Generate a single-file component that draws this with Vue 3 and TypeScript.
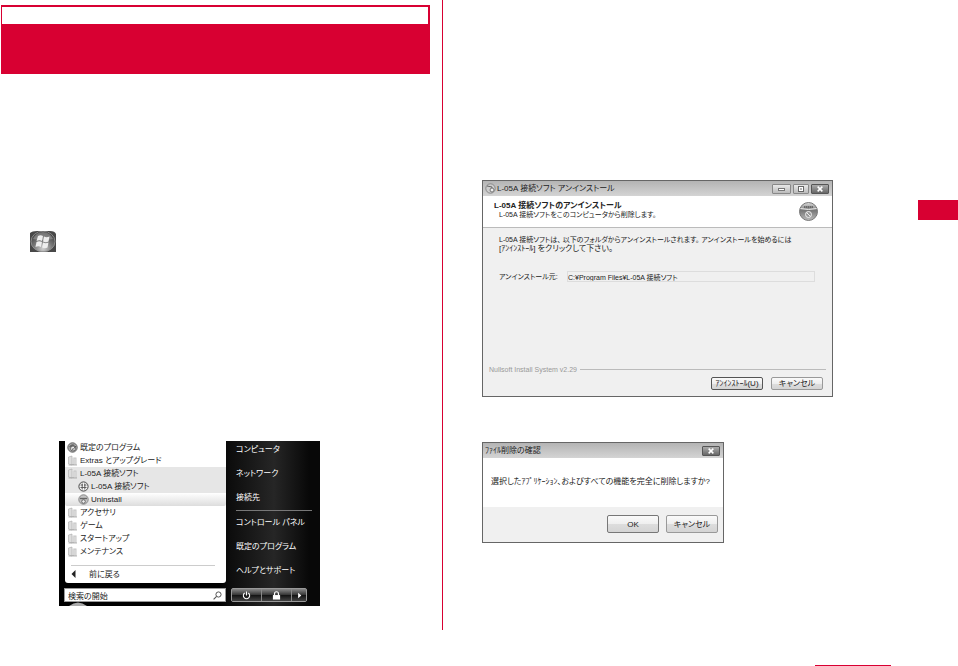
<script setup lang="ts">
import { ref } from 'vue'

interface ProgramItem {
  label: string
  icon: 'disc' | 'folder' | 'modem' | 'remove'
  state?: 'open' | 'child' | 'active'
}

const programs: ProgramItem[] = [
  { label: '既定のプログラム', icon: 'disc' },
  { label: 'Extras とアップグレード', icon: 'folder' },
  { label: 'L-05A 接続ソフト', icon: 'folder', state: 'open' },
  { label: 'L-05A 接続ソフト', icon: 'modem', state: 'child' },
  { label: 'Uninstall', icon: 'remove', state: 'active' },
  { label: 'アクセサリ', icon: 'folder' },
  { label: 'ゲーム', icon: 'folder' },
  { label: 'スタートアップ', icon: 'folder' },
  { label: 'メンテナンス', icon: 'folder' },
]

const places: string[] = ['コンピュータ', 'ネットワーク', '接続先']
const tools: string[] = ['コントロール パネル', '既定のプログラム', 'ヘルプとサポート']

const query = ref('検索の開始')
const folder = ref('C:¥Program Files¥L-05A 接続ソフト')
</script>

<template>
  <div class="page">
    <main class="columns">
      <section class="left">
        <header class="chapter"><div class="chapter-strip"></div></header>

        <svg class="orb" viewBox="0 0 26 21" aria-hidden="true">
          <defs>
            <radialGradient id="orbFill" cx="50%" cy="85%" r="80%">
              <stop offset="0" stop-color="#d0d0d0" />
              <stop offset=".5" stop-color="#777" />
              <stop offset="1" stop-color="#3c3c3c" />
            </radialGradient>
          </defs>
          <path d="M0 2Q2 0 7 0H20Q25 0 26 3V21H0Z" fill="#484848" />
          <ellipse cx="13" cy="10.5" rx="12" ry="10.3" fill="url(#orbFill)" stroke="#999" stroke-width=".8" />
          <path d="M3 8Q6 1 13 1T23 8Q13 10 3 8Z" fill="#aaa" opacity=".5" />
          <path d="M8 5Q10.500 3.500 13 5L12 10Q9.500 8.500 6.500 10ZM14 5.500Q16.500 7 19.500 5.500L18.500 10.500Q16 12 13 10.500ZM6.500 11Q9 9.500 12 11L11 16Q8.500 14.500 5.500 16ZM13 11.500Q15.500 13 18.500 11.500L17.500 16.500Q15 18 12 16.500Z" fill="#eee" />
        </svg>

        <div class="start">
          <div class="programs">
            <ul>
              <li v-for="(p, i) in programs" :key="i" :class="p.state">
                <a href="#">
                  <svg v-if="p.icon === 'folder'" class="ico" viewBox="0 0 11 11" aria-hidden="true">
                    <path d="M1.500 2L5 1V10L1.500 9Z" fill="#ddd" stroke="#aaa" stroke-width=".6" />
                    <path d="M5 2.500H9.500V10H5Z" fill="#c4c4c4" />
                    <path d="M6 2V9M8 3.500V10" stroke="#f4f4f4" stroke-width=".8" />
                    <path d="M1.500 10H10" stroke="#999" stroke-width=".7" />
                  </svg>
                  <svg v-else-if="p.icon === 'disc'" class="ico" viewBox="0 0 11 11" aria-hidden="true">
                    <circle cx="5.5" cy="5.5" r="4.7" fill="#aaa" stroke="#666" />
                    <path d="M2 5Q4 1 8 3L5 6Z" fill="#666" />
                    <circle cx="6" cy="6.5" r="2.5" fill="#eee" stroke="#666" />
                    <path d="M4.8 6.5L6 7.6L9 4" fill="none" stroke="#555" />
                  </svg>
                  <svg v-else-if="p.icon === 'modem'" class="ico" viewBox="0 0 11 11" aria-hidden="true">
                    <circle cx="5.5" cy="5.5" r="4.6" fill="#f4f4f4" stroke="#444" />
                    <path d="M4.2 2.5V8.5M6.8 2.5V8.5M2.5 4H5M6 4H8.5M2.5 6.5H8.5" stroke="#555" stroke-width=".9" />
                  </svg>
                  <svg v-else class="ico" viewBox="0 0 11 11" aria-hidden="true">
                    <circle cx="5.5" cy="5.5" r="4.7" fill="#c4c4c4" stroke="#888" />
                    <path d="M2 4.500H9" stroke="#666" stroke-width="1.4" />
                    <circle cx="5.5" cy="7.5" r="1.8" fill="#eee" stroke="#666" />
                  </svg>
                  <span>{{ p.label }}</span>
                </a>
              </li>
            </ul>
            <button type="button" class="back">
              <svg viewBox="0 0 5 8" aria-hidden="true"><path d="M4.5 0V8L0.500 4Z" fill="#222" /></svg>
              <span>前に戻る</span>
            </button>
          </div>

          <nav class="links">
            <a v-for="l in places" :key="l" href="#">{{ l }}</a>
            <hr />
            <a v-for="l in tools" :key="l" href="#">{{ l }}</a>
          </nav>

          <div class="search">
            <input v-model="query" type="text" aria-label="検索の開始" />
            <svg viewBox="0 0 9 9" aria-hidden="true">
              <circle cx="5.5" cy="3.5" r="2.6" fill="none" stroke="#555" />
              <path d="M3.6 5.4L.6 8.4" stroke="#555" stroke-width="1.2" />
            </svg>
          </div>

          <div class="power">
            <button type="button" aria-label="電源">
              <svg viewBox="0 0 10 10" aria-hidden="true">
                <path d="M3 2.2A3.5 3.5 0 1 0 7 2.2M5 .5V5" fill="none" stroke="#fff" stroke-width="1.2" />
              </svg>
            </button>
            <button type="button" aria-label="ロック">
              <svg viewBox="0 0 10 10" aria-hidden="true">
                <rect x="1" y="4.5" width="8" height="5" fill="#fff" />
                <path d="M2.8 5V3A2.2 2.2 0 0 1 7.2 3V5" fill="none" stroke="#fff" stroke-width="1.3" />
              </svg>
            </button>
            <button type="button" class="more" aria-label="その他">
              <svg viewBox="0 0 10 10" aria-hidden="true"><path d="M3.5 2L7 5L3.5 8Z" fill="#fff" /></svg>
            </button>
          </div>

          <svg class="peek" viewBox="0 0 18 4" aria-hidden="true">
            <path d="M0 4Q9-3 18 4Z" fill="#aaa" />
          </svg>
        </div>
      </section>

      <section class="right">
        <div class="window installer">
          <div class="titlebar">
            <svg class="ico" viewBox="0 0 11 11" aria-hidden="true">
              <circle cx="5.5" cy="5.5" r="4.7" fill="#ccc" stroke="#888" />
              <path d="M2 3L7 4L6 8" fill="none" stroke="#666" />
              <circle cx="7" cy="7" r="2" fill="#eee" stroke="#777" />
            </svg>
            <span class="title">L-05A 接続ソフト アンインストール</span>
            <div class="controls">
              <button type="button" aria-label="最小化">
                <svg viewBox="0 0 17 8" aria-hidden="true"><rect x="5.5" y="3.5" width="6" height="2" fill="#fff" stroke="#777" /></svg>
              </button>
              <button type="button" class="max" aria-label="最大化">
                <svg viewBox="0 0 14 8" aria-hidden="true"><rect x="4.5" y="1.5" width="5" height="5" fill="#fff" stroke="#666" /><path d="M6 4H8" stroke="#666" /></svg>
              </button>
              <button type="button" class="close" aria-label="閉じる">
                <svg viewBox="0 0 17 8" aria-hidden="true"><path d="M6 1.5L11 6.5M11 1.5L6 6.5" stroke="#fff" stroke-width="1.6" /></svg>
              </button>
            </div>
          </div>
          <div class="banner">
            <div>
              <h2>L-05A 接続ソフトのアンインストール</h2>
              <p>L-05A 接続ソフトをこのコンピュータから削除します。</p>
            </div>
            <svg viewBox="0 0 19 19" aria-hidden="true">
              <defs>
                <linearGradient id="badgeFill" x2="0" y2="1">
                  <stop offset="0" stop-color="#ddd" />
                  <stop offset=".45" stop-color="#777" />
                  <stop offset="1" stop-color="#bbb" />
                </linearGradient>
              </defs>
              <circle cx="9.5" cy="9.5" r="9" fill="url(#badgeFill)" stroke="#777" />
              <path d="M1.5 6.5Q9.5 8.5 17.5 6.5" fill="none" stroke="#e8e8e8" />
              <path d="M5 5H14" stroke="#555" stroke-width="1.4" stroke-dasharray="1.5 .5" />
              <circle cx="9.5" cy="12.5" r="3" fill="#999" stroke="#eee" />
              <path d="M7.5 10.5L11.5 14.5" stroke="#eee" />
            </svg>
          </div>
          <div class="body">
            <p>L-05A 接続ソフトは、 以下のフォルダからアンインストールされます。 アンインストールを始めるには</p>
            <p class="hint">[ｱﾝｲﾝｽﾄｰﾙ] をクリックして下さい。</p>
            <div class="field">
              <label for="source">アンインストール元:</label>
              <input id="source" v-model="folder" type="text" readonly />
            </div>
            <div class="brand"><span>Nullsoft Install System v2.29</span></div>
            <div class="actions">
              <button type="button" class="primary">ｱﾝｲﾝｽﾄｰﾙ(U)</button>
              <button type="button">キャンセル</button>
            </div>
          </div>
        </div>

        <div class="window confirm">
          <div class="titlebar">
            <span class="title">ﾌｧｲﾙ削除の確認</span>
            <div class="controls">
              <button type="button" class="close" aria-label="閉じる">
                <svg viewBox="0 0 17 8" aria-hidden="true"><path d="M6 1.5L11 6.5M11 1.5L6 6.5" stroke="#fff" stroke-width="1.6" /></svg>
              </button>
            </div>
          </div>
          <p class="message">選択したｱﾌﾟﾘｹｰｼｮﾝ、およびすべての機能を完全に削除しますか?</p>
          <div class="choices">
            <button type="button" class="primary">OK</button>
            <button type="button">キャンセル</button>
          </div>
        </div>
      </section>

      <aside class="tab"></aside>
    </main>
    <footer class="foot"><hr /></footer>
  </div>
</template>

<style>
body {
  background: #fff;
}
</style>

<style scoped>
* {
  box-sizing: border-box;
}
.page {
  font-family: "Liberation Sans", "Noto Sans CJK JP", sans-serif;
  font-size: 8px;
  line-height: 9px;
  font-feature-settings: "palt";
  color: #222;
}
p, h2, ul, hr {
  margin: 0;
  padding: 0;
}
ul {
  list-style: none;
}
a {
  color: inherit;
  text-decoration: none;
}
button, input {
  font: inherit;
  font-feature-settings: inherit;
  color: inherit;
  padding: 0;
  margin: 0;
  border: 0;
  min-width: 0;
}
svg {
  display: block;
  flex: none;
}
.ico {
  width: 11px;
  height: 11px;
}
.columns {
  display: grid;
  grid-template-columns: minmax(0, 443fr) minmax(0, 475fr) 40px;
  min-height: 630px;
}
.left {
  border-right: 1px solid #d80032;
  padding: 5px 12px 24px 1px;
}
.chapter {
  background: #d80032;
  height: 69px;
  padding: 2px 2px 0 1px;
}
.chapter-strip {
  background: #fff;
  height: 17px;
}
.orb {
  width: 26px;
  height: 21px;
  margin: 157px 0 0 29px;
}

.start {
  width: 261px;
  margin: 189px 0 0 58px;
  padding: 0 8px 0 5px;
  background: linear-gradient(90deg, #000 0 160px, #0c0c0c 170px, #262626 215px, #080808 250px);
  display: grid;
  grid-template-columns: 162px 1fr;
  column-gap: 5px;
}
.programs {
  background: #fff;
  border-radius: 0 0 3px 3px;
  height: 142px;
  margin-left: 1px;
}
.programs li a {
  display: flex;
  align-items: center;
  gap: 2px;
  height: 13px;
  padding-left: 2px;
  white-space: nowrap;
}
.programs li.open,
.programs li.child {
  background: #e6e6e6;
}
.programs li.child a,
.programs li.active a {
  padding-left: 13px;
}
.programs li.active {
  background: linear-gradient(#fff, #ddd);
  border-radius: 2px;
}
.back {
  display: flex;
  align-items: center;
  gap: 13px;
  width: 144px;
  height: 17px;
  margin: 7px 0 0 6px;
  border-top: 1px solid #ccc;
  background: none;
}
.back svg {
  width: 5px;
  height: 8px;
}
.links {
  display: flex;
  flex-direction: column;
  height: 142px;
  padding-left: 5px;
  color: #fff;
  white-space: nowrap;
}
.links a {
  flex: none;
  height: 24px;
  line-height: 18px;
}
.links hr {
  border: 0;
  border-top: 1px solid #777;
  margin: -3px 0 3px;
}
.search {
  display: flex;
  align-items: center;
  height: 14px;
  margin-top: 5px;
  padding: 0 3px 0 3px;
  background: #fff;
  border: 1px solid #999;
}
.search input {
  flex: 1;
  background: none;
  height: 12px;
}
.search svg {
  width: 9px;
  height: 9px;
}
.power {
  display: flex;
  height: 14px;
  margin: 5px 5px 0 0;
  border: 1px solid #999;
  border-radius: 2px;
}
.power button {
  flex: 1;
  display: flex;
  align-items: center;
  justify-content: center;
  background: linear-gradient(#888, #333 50%, #111 50%, #444);
  border-right: 1px solid #888;
}
.power .more {
  flex: none;
  width: 14px;
  border: 0;
}
.power svg {
  width: 9px;
  height: 9px;
}
.peek {
  width: 18px;
  height: 4px;
  margin-left: 5px;
}

.right {
  padding: 180px 20px 0 39px;
}
.window {
  border: 1px solid #666;
  background: #f0f0f0;
}
.titlebar {
  display: flex;
  align-items: center;
  gap: 1px;
  height: 15px;
  padding: 0 3px 0 2px;
  background: linear-gradient(#b4b4b4, #d4d4d4);
  white-space: nowrap;
}
.title {
  flex: 1;
}
.controls {
  display: flex;
  gap: 2px;
}
.controls button {
  width: 19px;
  height: 10px;
  background: linear-gradient(#e8e8e8, #bbb);
  border: 1px solid #888;
  border-radius: 1px;
}
.controls .max {
  width: 16px;
}
.controls .close {
  width: 18px;
  background: linear-gradient(#aaa, #666);
  border-color: #555;
}
.controls svg {
  width: 100%;
  height: 8px;
}
.installer {
  width: 351px;
}
.banner {
  display: flex;
  justify-content: space-between;
  align-items: center;
  height: 32px;
  padding: 0 14px 0 11px;
  background: #fff;
  border-bottom: 1px solid #bbb;
}
.banner h2 {
  font-size: 8px;
  line-height: 9px;
}
.banner p {
  padding-left: 5px;
  font-size: 7px;
}
.banner svg {
  width: 19px;
  height: 19px;
}
.banner > div {
  padding-bottom: 4px;
}
.body {
  padding: 7px 6px 6px;
}
.body p {
  padding-left: 10px;
  font-size: 7px;
  white-space: nowrap;
}
.body .hint {
  font-size: 8px;
}
.field {
  display: flex;
  align-items: center;
  margin-top: 18px;
  padding: 0 11px 0 10px;
  font-size: 7px;
}
.field label {
  width: 68px;
}
.field input {
  flex: 1;
  height: 11px;
  background: #f0f0f0;
  border: 1px solid #ddd;
}
.brand {
  display: flex;
  align-items: center;
  gap: 3px;
  margin-top: 83px;
  color: #999;
  font-size: 7px;
}
.brand::after {
  content: "";
  flex: 1;
  border-top: 1px solid #bbb;
}
.actions,
.choices {
  display: flex;
  justify-content: flex-end;
}
.actions {
  gap: 8px;
  margin-top: 3px;
  padding-right: 3px;
}
.actions button,
.choices button {
  width: 52px;
  background: linear-gradient(#fafafa, #eee 50%, #ddd 50%, #d4d4d4);
  border: 1px solid #999;
  border-radius: 2px;
  white-space: nowrap;
}
.actions button {
  display: flex;
  align-items: center;
  justify-content: center;
  height: 13px;
}
.actions .primary {
  border-color: #555;
}
.confirm {
  width: 242px;
  margin-top: 45px;
}
.confirm .message {
  height: 49px;
  padding: 19px 0 0 8px;
  background: #fff;
  white-space: nowrap;
}
.choices {
  gap: 7px;
  padding: 8px 5px 9px;
}
.choices button {
  height: 18px;
}
.choices .primary {
  border-color: #777;
}
.tab {
  height: 20px;
  margin-top: 200px;
  background: #d80032;
}
.foot {
  padding: 35px 67px 0 0;
}
.foot hr {
  width: 76px;
  margin-left: auto;
  border: 0;
  border-top: 1px solid #d80032;
}
</style>
